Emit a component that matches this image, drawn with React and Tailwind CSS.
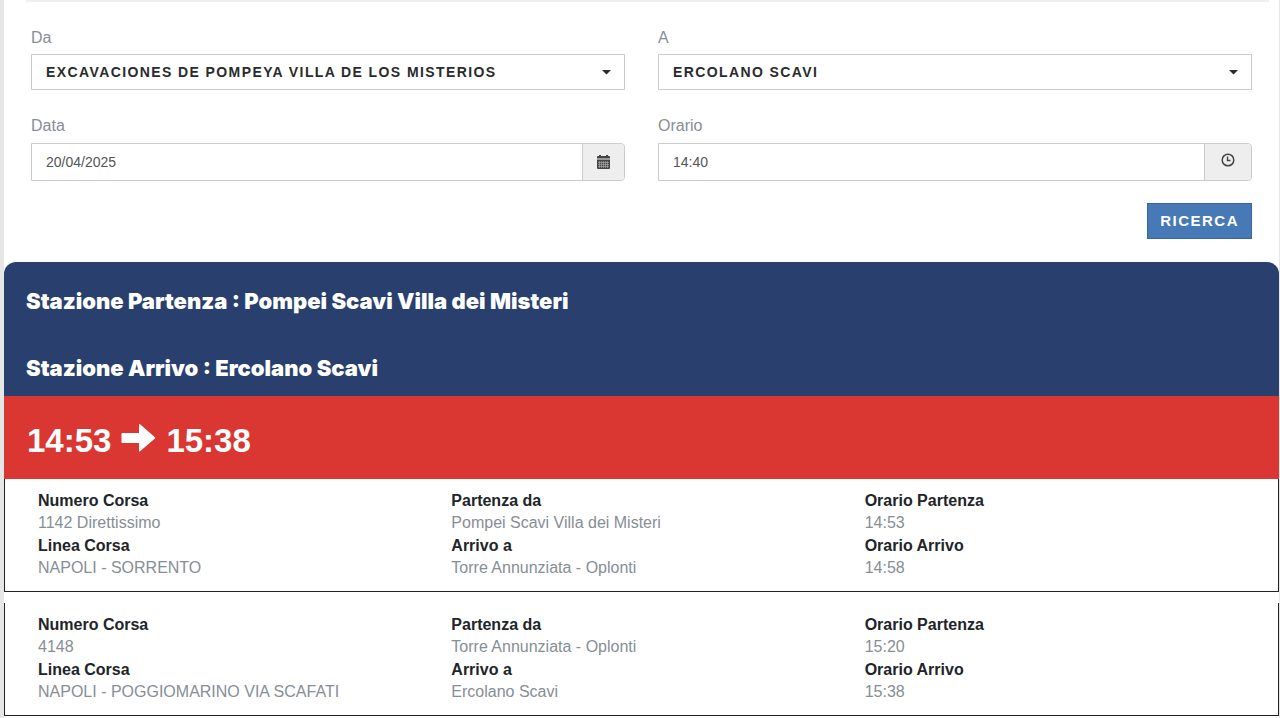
const stations = {
  from: ["EXCAVACIONES DE POMPEYA VILLA DE LOS MISTERIOS", "ERCOLANO SCAVI"],
  to: ["ERCOLANO SCAVI", "EXCAVACIONES DE POMPEYA VILLA DE LOS MISTERIOS"],
};

const legs = [
  {
    number: "1142 Direttissimo",
    line: "NAPOLI - SORRENTO",
    from: "Pompei Scavi Villa dei Misteri",
    to: "Torre Annunziata - Oplonti",
    departure: "14:53",
    arrival: "14:58",
  },
  {
    number: "4148",
    line: "NAPOLI - POGGIOMARINO VIA SCAFATI",
    from: "Torre Annunziata - Oplonti",
    to: "Ercolano Scavi",
    departure: "15:20",
    arrival: "15:38",
  },
];

function CalendarIcon() {
  return (
    <svg width="13" height="14" viewBox="0 0 13 14" fill="#444" aria-hidden="true">
      <path d="M1 1h1V0h2v1h5V0h2v1h1a1 1 0 0 1 1 1v1.5H0V2a1 1 0 0 1 1-1z" />
      <path fill="#999" d="M0 3.5h13V5H0z" />
      <path d="M0 5h13v8a1 1 0 0 1-1 1H1a1 1 0 0 1-1-1z" />
      <path
        stroke="#b5b5b5"
        strokeWidth="0.6"
        d="M1 7.5h11M1 9.5h11M1 11.5h11M2.5 6v7M4.5 6v7M6.5 6v7M8.5 6v7M10.5 6v7"
      />
    </svg>
  );
}

function ClockIcon() {
  return (
    <svg width="14" height="14" viewBox="0 0 14 14" fill="none" stroke="#444" aria-hidden="true">
      <circle cx="7" cy="7" r="5.8" strokeWidth="1.5" />
      <path d="M6.5 3.5v4h3" strokeWidth="1.4" />
    </svg>
  );
}

function ArrowIcon() {
  return (
    <svg width="35" height="28" viewBox="0 0 34 28" fill="#fff" aria-hidden="true">
      <path d="M1 9h16.500V.8c0-.8.6-1 1.100-.5L33.400 13.300c.4.4.4.900 0 1.300L18.600 27.300c-.5.500-1.100.3-1.100-.5V19H1c-.6 0-1-.4-1-1v-8c0-.6.4-1 1-1z" />
    </svg>
  );
}

function StationSelect({ id, label, options }) {
  return (
    <div>
      <label htmlFor={id} className="block text-base leading-6 text-[#868e96]">
        {label}
      </label>
      <div className="relative mt-1">
        <select
          id={id}
          className="block h-9 w-full appearance-none border border-[#ccc] bg-white pr-10 pl-3.5 text-sm font-bold tracking-widest text-[#292b2c]"
        >
          {options.map((name) => (
            <option key={name}>{name}</option>
          ))}
        </select>
        <svg
          width="9"
          height="5"
          viewBox="0 0 9 5"
          fill="#292b2c"
          aria-hidden="true"
          className="pointer-events-none absolute top-4 right-3.5"
        >
          <path d="M0 0h9L4.500 4.500z" />
        </svg>
      </div>
    </div>
  );
}

function PickerInput({ id, label, value, button, children }) {
  return (
    <div>
      <label htmlFor={id} className="block text-base leading-6 text-[#868e96]">
        {label}
      </label>
      <div className="mt-[5px] flex h-[38px] rounded-r border border-[#ccc]">
        <input
          id={id}
          type="text"
          defaultValue={value}
          className="min-w-0 flex-1 bg-white px-3.5 text-sm text-[#555]"
        />
        <button
          type="button"
          aria-label={button}
          className="rounded-r border-l border-[#ccc] bg-[#eee] px-3.5"
        >
          {children}
        </button>
      </div>
    </div>
  );
}

function Detail({ items }) {
  return (
    <dl className="text-base leading-[22px]">
      {items.map(([term, value]) => (
        <div key={term} className="pb-px">
          <dt className="font-bold text-[#212529]">{term}</dt>
          <dd className="text-[#868e96]">{value}</dd>
        </div>
      ))}
    </dl>
  );
}

function Leg({ leg }) {
  return (
    <li className="grid grid-cols-3 border border-t-0 border-[#222] pt-[11px] pb-[11px] pl-[33px]">
      <Detail items={[["Numero Corsa", leg.number], ["Linea Corsa", leg.line]]} />
      <Detail items={[["Partenza da", leg.from], ["Arrivo a", leg.to]]} />
      <Detail items={[["Orario Partenza", leg.departure], ["Orario Arrivo", leg.arrival]]} />
    </li>
  );
}

export default function App() {
  return (
    <main className="min-h-screen border-r border-l-4 border-r-[#e6e6e6] border-l-[#e6e6e6] bg-white font-['Liberation_Sans',Arial,sans-serif]">
      <hr className="mr-2.5 ml-[22px] border-t-2 border-[#f0f0f0]" />

      {/* Search form */}
      <form className="px-[27px] pt-6 pb-[23px]">
        <div className="grid grid-cols-2 gap-x-[33px] gap-y-6">
          <StationSelect id="from" label="Da" options={stations.from} />
          <StationSelect id="to" label="A" options={stations.to} />
          <PickerInput id="date" label="Data" value="20/04/2025" button="Apri calendario">
            <CalendarIcon />
          </PickerInput>
          <PickerInput id="time" label="Orario" value="14:40" button="Scegli orario">
            <span className="flex px-0.5 pb-1">
              <ClockIcon />
            </span>
          </PickerInput>
        </div>
        <div className="mt-[22px] flex justify-end">
          <button
            type="button"
            className="h-9 border border-[#3566a0] bg-[#4679b5] px-3 text-[15px] font-bold tracking-widest text-white"
          >
            RICERCA
          </button>
        </div>
      </form>

      {/* Journey */}
      <section>
        <div className="flex flex-col gap-[35px] rounded-t-xl bg-[#293f6d] px-[22px] pt-[23px] pb-3 font-['Arial_Black',Inter,sans-serif] text-[22px] leading-8 font-black text-white">
          <h2>Stazione Partenza : Pompei Scavi Villa dei Misteri</h2>
          <h2>Stazione Arrivo : Ercolano Scavi</h2>
        </div>
        <div className="flex h-[83px] items-center gap-2.5 bg-[#db3732] px-[23px] pt-1.5 text-[33px] font-bold text-white">
          <span>14:53</span>
          <span className="pb-1.5">
            <ArrowIcon />
          </span>
          <span>15:38</span>
        </div>
        <ul className="flex flex-col gap-[11px]">
          {legs.map((leg) => (
            <Leg key={leg.number} leg={leg} />
          ))}
        </ul>
      </section>
    </main>
  );
}
